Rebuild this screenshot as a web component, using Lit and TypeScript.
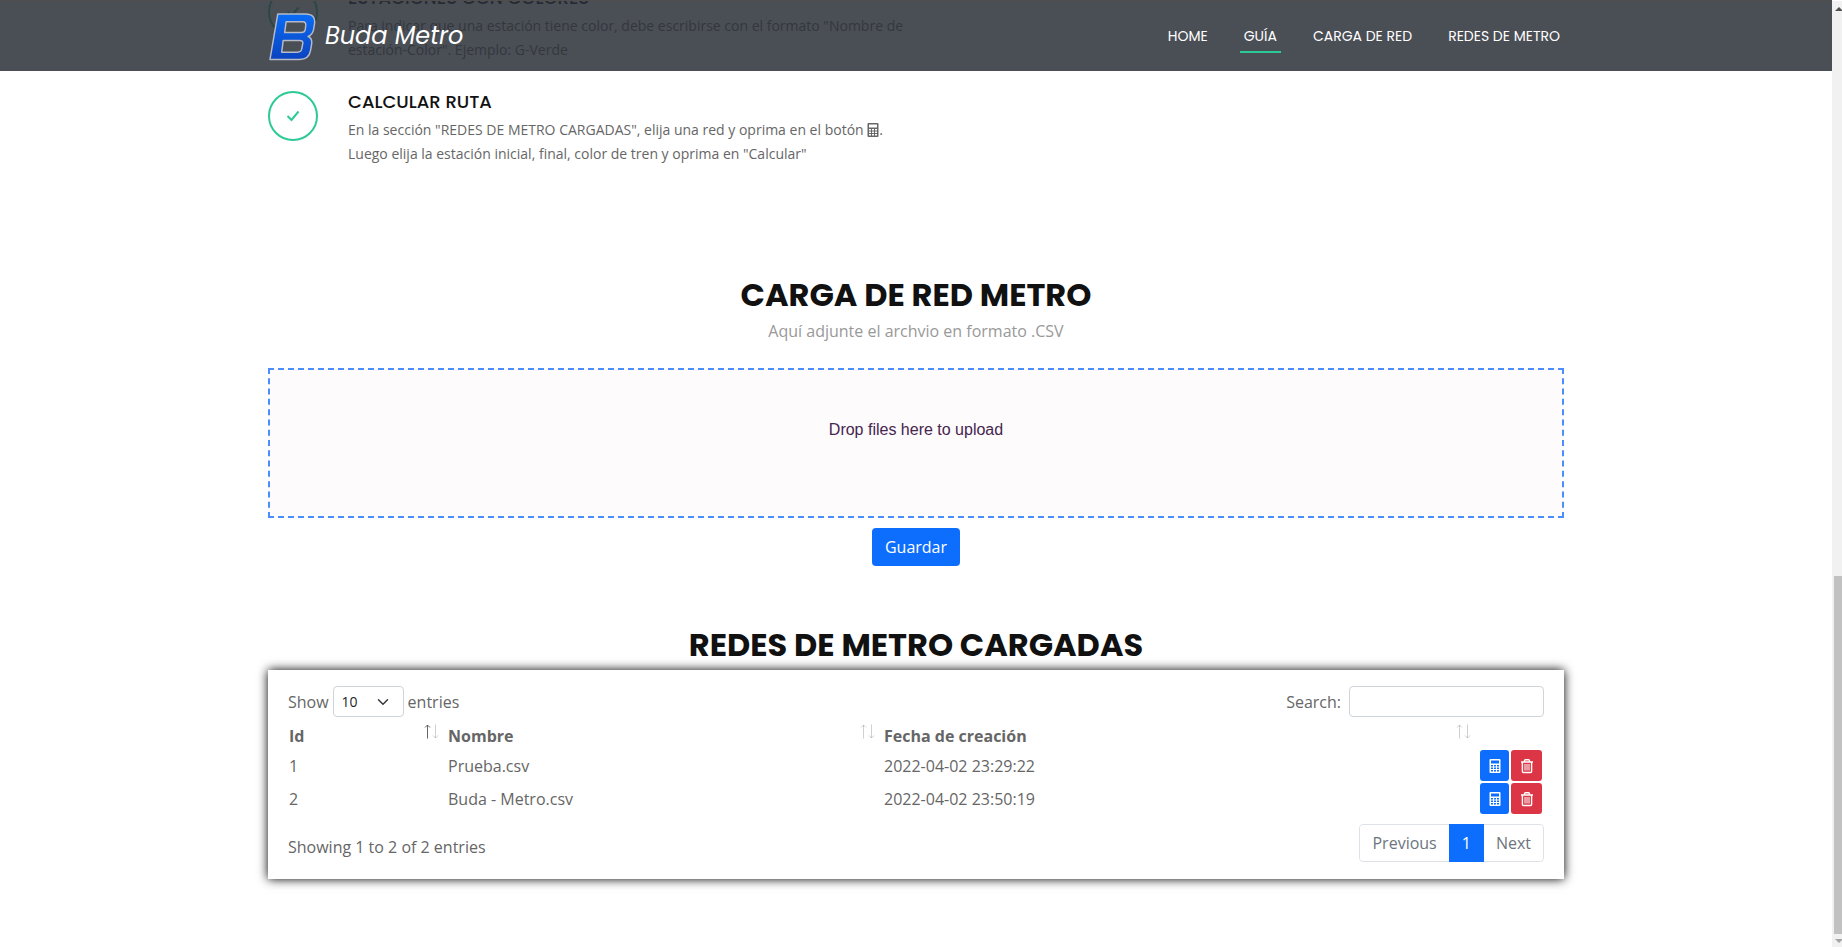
import { LitElement, html, css } from "lit";
import { customElement, state } from "lit/decorators.js";

interface Net { id: number; name: string; created: string }

const calc = html`<svg class="calc" viewBox="0 0 12 16" aria-hidden="true">
  <path fill="currentColor" fill-rule="evenodd" d="M1.500 1h9q1 0 1 1v12q0 1-1 1h-9q-1 0-1-1V2q0-1 1-1zM2 2.500v3h8v-3zM2 7v1.600h2V7zM5 7v1.600h2V7zM8 7v1.600h2V7zM2 9.500v1.600h2V9.500zM5 9.500v1.600h2V9.500zM8 9.500v1.600h2V9.500zM2 12v1.600h2V12zM5 12v1.600h2V12zM8 12v1.600h2V12z"/></svg>`;
const trash = html`<svg class="trash" viewBox="0 0 14 16" aria-hidden="true">
  <g fill="none" stroke="currentColor"><path stroke-width="1.400" d="M1 4h12M4.500 4V2.700q0-1 1-1h3q1 0 1 1V4M2.400 4v9.500q0 1 1 1h7.200q1 0 1-1V4"/><path stroke-width="1" d="M5 6v6.500M7 6v6.500M9 6v6.500"/></g></svg>`;
const check = html`<svg class="check" viewBox="0 0 14 12" aria-hidden="true"><path fill="none" stroke="currentColor" stroke-width="2" d="M1.500 6l4 4 7-8.500"/></svg>`;
const sort = (asc: boolean) => html`<svg class="sort" viewBox="0 0 15 15" aria-hidden="true">
  <g fill="none" stroke="currentColor"><path class=${asc ? "on" : "off"} d="M3.500 14.500V1M1 3.500L3.500 1 6 3.500"/><path class="off" d="M11.500 .5V14M9 11.500l2.500 2.500 2.500-2.500"/></g></svg>`;

@customElement("app-root")
export class AppRoot extends LitElement {
  @state() private nets: Net[] = [
    { id: 1, name: "Prueba.csv", created: "2022-04-02 23:29:22" },
    { id: 2, name: "Buda - Metro.csv", created: "2022-04-02 23:50:19" },
  ];

  static styles = css`
    :host { display: flex; height: 100vh; overflow: hidden; background: #fff; color: #666;
      font: 16px/24px "Open Sans", sans-serif; --head: Poppins, Inter, sans-serif; }
    * { box-sizing: border-box; }
    h2, h4, p { margin: 0; }
    button, input, select { font: inherit; color: inherit; }
    .view { position: relative; flex: 1; min-width: 0; display: flex; flex-direction: column; justify-content: flex-end; }
    .container { width: 100%; max-width: 1320px; margin: 0 auto; padding: 0 12px; }
    header { position: absolute; top: 0; left: 0; right: 0; height: 71px; display: flex; align-items: center;
      background: rgba(42, 47, 55, .85); border-top: 1px solid #504e4d; z-index: 2; }
    .bar { display: flex; align-items: center; justify-content: space-between; }
    .brand { display: flex; align-items: center; gap: 9px; color: #fff; text-decoration: none; font: italic 24px/46px var(--head); }
    .logo { width: 48px; height: 49px; }
    nav { display: flex; gap: 28px; padding-top: 2px; }
    nav a { color: #fff; text-decoration: none; font: 14px/30px var(--head); padding: 0 4px; border-bottom: 2px solid transparent; }
    nav a.active { border-color: #2dc997; }
    .steps { display: flex; flex-direction: column; gap: 29px; }
    .step { display: flex; gap: 30px; width: 50%; padding-right: 12px; }
    .ring { flex: none; width: 50px; height: 50px; border: 2px solid #2dc997; border-radius: 50%; color: #2dc997;
      display: flex; align-items: center; justify-content: center; }
    .check { width: 14px; height: 12px; }
    .step h4 { font: 500 18px/22px var(--head); color: #111; }
    .step p { font-size: 14px; padding-top: 5px; }
    .calc { width: 12px; height: 16px; vertical-align: -3px; }
    .title { font: 700 32px/38px var(--head); color: #111; text-align: center; }
    .upload { padding-top: 110px; display: flex; flex-direction: column; align-items: center; }
    .sub { color: #999; padding-top: 5px; }
    .drop { width: 100%; height: 150px; margin: 25px 0 10px; padding-top: 48px; border: 2px dashed #4a8dff; background: #fdfbfc;
      color: #46254f; text-align: center; font: 16px/24px "Liberation Sans", sans-serif; cursor: pointer; }
    .drop input { display: none; }
    .save { height: 38px; border: 0; border-radius: 4px; background: #0d6efd; color: #fff; padding: 0 13px; }
    .nets { padding-top: 60px; padding-bottom: 68px; }
    .card { margin-top: 6px; padding: 16px 20px 17px; background: #fff; box-shadow: 0 0 10px #000; }
    .row { display: flex; justify-content: space-between; align-items: center; }
    .row label { display: flex; align-items: center; gap: 4px; }
    .row label.search { gap: 8px; }
    select { appearance: none; width: 71px; height: 31px; border: 1px solid #ced4da; border-radius: 4px; padding: 0 8px;
      font-size: 14px; color: #212529;
      background: #fff url("data:image/svg+xml,%3Csvg xmlns='http://www.w3.org/2000/svg' viewBox='0 0 16 16'%3E%3Cpath fill='none' stroke='%23343a40' stroke-linecap='round' stroke-linejoin='round' stroke-width='2' d='M2 5l6 6 6-6'/%3E%3C/svg%3E") no-repeat right 14px center / 12px; }
    .search input { width: 195px; height: 31px; border: 1px solid #ced4da; border-radius: 4px; padding: 0 8px; font-size: 14px; background: #fff; }
    table { width: 100%; table-layout: fixed; border-collapse: collapse; margin-top: 6px; }
    th, td { text-align: left; padding: 1px; height: 33px; }
    th { height: 26px; }
    .c1 { width: 159px; } .c2 { width: 436px; } .c4 { width: 65px; }
    .th { display: flex; justify-content: space-between; }
    .sort { width: 15px; height: 15px; margin-right: 7px; }
    .on { opacity: 1; } .off { opacity: .3; }
    .acts { display: flex; gap: 2px; }
    .acts button { height: 31px; border: 0; border-radius: 3px; color: #fff; padding: 0; display: flex; align-items: center; justify-content: center; }
    .go { width: 29px; background: #0d6efd; } .del { width: 31px; background: #dc3545; }
    .trash { width: 14px; height: 16px; }
    .foot { padding-top: 9px; }
    .info { padding-top: 8px; }
    .pages { display: flex; border: 1px solid #dee2e6; border-radius: 4px; height: 38px; }
    .pages button { border: 0; background: #fff; color: #6c757d; padding: 0 12px; border-radius: 4px; }
    .pages .cur { background: #0d6efd; color: #fff; margin: -1px 0; padding: 0 13px; border-radius: 0; }
    .scroll { flex: none; width: 10px; margin-top: 1px; background: #f1f1f1; display: flex; flex-direction: column; align-items: flex-end; }
    .arrow { width: 8px; height: 13px; }
    .track { flex: 562; } .thumb { flex: 358; width: 8px; background: #c1c1c1; }
  `;

  render() {
    return html`
      <div class="view">
        <header><div class="container bar">
          <a class="brand" href="#home"><svg class="logo" viewBox="0 0 49 50" aria-hidden="true">
            <defs><linearGradient id="g" x1="0" y1="0" x2="0" y2="1"><stop offset="0" stop-color="#0a6cf5"/><stop offset="1" stop-color="#0b43c0"/></linearGradient></defs>
            <path fill="url(#g)" stroke="#b4bac8" stroke-width="1.500" stroke-linejoin="round" fill-rule="evenodd" d="M10 2H38Q49 2 47.500 12L46.500 18Q45.500 23 41 25Q45.500 27 44.500 33L43.500 39Q42 48.500 32 48.500H2ZM18.500 10L17 21H34Q37.500 21 38 18L38.500 14Q39 10 35.500 10ZM15.500 29L14 41H30Q34 41 34.500 37.500L35.500 32Q36 29 32.500 29Z"/></svg>
            <span>Buda Metro</span></a>
          <nav><a href="#home">HOME</a><a class="active" href="#guia">GUÍA</a><a href="#carga">CARGA DE RED</a><a href="#redes">REDES DE METRO</a></nav>
        </div></header>

        <section class="container steps" id="guia">
          <div class="step"><span class="ring">${check}</span><div><h4>ESTACIONES CON COLORES</h4>
            <p>Para indicar que una estación tiene color, debe escribirse con el formato "Nombre de estación-Color". Ejemplo: G-Verde</p></div></div>
          <div class="step"><span class="ring">${check}</span><div><h4>CALCULAR RUTA</h4>
            <p>En la sección "REDES DE METRO CARGADAS", elija una red y oprima en el botón ${calc}.<br>Luego elija la estación inicial, final, color de tren y oprima en "Calcular"</p></div></div>
        </section>

        <section class="container upload" id="carga">
          <h2 class="title">CARGA DE RED METRO</h2>
          <p class="sub">Aquí adjunte el archvio en formato .CSV</p>
          <label class="drop">Drop files here to upload<input type="file" accept=".csv" /></label>
          <button class="save">Guardar</button>
        </section>

        <section class="container nets" id="redes">
          <h2 class="title">REDES DE METRO CARGADAS</h2>
          <div class="card">
            <div class="row">
              <label>Show <select><option>10</option><option>25</option><option>50</option></select> entries</label>
              <label class="search">Search: <input type="search" /></label>
            </div>
            <table>
              <thead><tr>
                <th class="c1"><div class="th">Id ${sort(true)}</div></th>
                <th class="c2"><div class="th">Nombre ${sort(false)}</div></th>
                <th><div class="th">Fecha de creación ${sort(false)}</div></th>
                <th class="c4"></th>
              </tr></thead>
              <tbody>${this.nets.map((n) => html`<tr><td>${n.id}</td><td>${n.name}</td><td>${n.created}</td>
                <td><div class="acts"><button class="go" aria-label="Calcular">${calc}</button><button class="del" aria-label="Eliminar">${trash}</button></div></td></tr>`)}</tbody>
            </table>
            <div class="row foot"><span class="info">Showing 1 to 2 of 2 entries</span>
              <div class="pages"><button>Previous</button><button class="cur">1</button><button>Next</button></div></div>
          </div>
        </section>
      </div>
      <div class="scroll" aria-hidden="true">
        <svg class="arrow" viewBox="0 0 8 13"><path fill="#505050" d="M1 10l4-4 4 4z"/></svg>
        <div class="track"></div><div class="thumb"></div>
        <svg class="arrow" viewBox="0 0 8 13"><path fill="#a3a3a3" d="M1 5l4 4 4-4z"/></svg>
      </div>`;
  }
}
